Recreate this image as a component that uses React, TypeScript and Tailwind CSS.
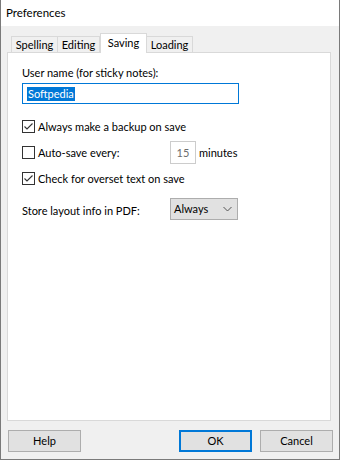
import React from "react";

const font = { fontFamily: 'Lato, "Liberation Sans", sans-serif' };

function Check({ checked }: { checked: boolean }) {
  return (
    <div className="w-[13px] h-[13px] border border-[#333333] bg-white flex items-center justify-center shrink-0">
      {checked && (
        <svg width="11" height="11" viewBox="0 0 11 11">
          <polyline points="1.5,5.5 4,8 9.5,2.5" fill="none" stroke="#333333" strokeWidth="1.1" />
        </svg>
      )}
    </div>
  );
}

export default function App() {
  return (
    <div
      className="w-[340px] h-[460px] border-x border-b border-[#7a7a7a] bg-[#f0f0f0] flex flex-col text-[11px] text-black leading-[16px]"
      style={font}
    >
      <div className="h-[26px] bg-white flex items-center pl-[5px] text-[11.5px]">Preferences</div>
      <div className="mt-[7px] h-[19px] flex items-end pl-[10px] pr-[8px]">
        <div className="w-[47px] h-[16px] border border-b-0 border-[#d9d9d9] flex items-center justify-center">Spelling</div>
        <div className="w-[42px] h-[16px] border border-b-0 border-l-0 border-[#d9d9d9] flex items-center justify-center">Editing</div>
        <div className="w-[47px] h-[20px] -mb-px relative z-10 border border-b-0 border-[#d9d9d9] bg-white flex items-start pt-[1px] justify-center">Saving</div>
        <div className="w-[46px] h-[16px] border border-b-0 border-l-0 border-[#d9d9d9] flex items-center justify-center">Loading</div>
      </div>
      <div className="ml-[6px] mr-[8px] h-[369px] border border-[#d9d9d9] bg-white flex flex-col pl-[14px]">
        <div className="mt-[12px] h-[16px]">User name (for sticky notes):</div>
        <div className="mt-[2px] w-[217px] h-[21px] border border-[#0078d7] flex items-center pl-[4px]">
          <span className="bg-[#0078d7] text-white h-[14px] flex items-center px-[1px]">Softpedia</span>
        </div>
        <div className="mt-[16px] h-[13px] flex items-center gap-[3px]">
          <Check checked />
          <span>Always make a backup on save</span>
        </div>
        <div className="mt-[13px] h-[13px] flex items-center">
          <Check checked={false} />
          <span className="ml-[3px] w-[132px]">Auto-save every:</span>
          <div className="w-[26px] h-[23px] border border-[#cccccc] flex items-center justify-center text-[#6d6d6d] shrink-0">15</div>
          <span className="ml-[3px]">minutes</span>
        </div>
        <div className="mt-[13px] h-[13px] flex items-center gap-[3px]">
          <Check checked />
          <span>Check for overset text on save</span>
        </div>
        <div className="mt-[13px] h-[22px] flex items-center">
          <span className="w-[148px] pt-[4px]">Store layout info in PDF:</span>
          <div className="w-[68px] h-[22px] border border-[#adadad] bg-[#e1e1e1] flex items-center pl-[3px] pr-[5px] justify-between">
            <span>Always</span>
            <svg width="9" height="6" viewBox="0 0 9 6">
              <polyline points="0.5,1 4.5,5 8.5,1" fill="none" stroke="#555" strokeWidth="1" />
            </svg>
          </div>
        </div>
      </div>
      <div className="mt-[9px] h-[22px] flex pl-[7px] pr-[6px]">
        <div className="w-[73px] h-[22px] border border-[#adadad] bg-[#e1e1e1] flex items-center justify-center">Help</div>
        <div className="flex-1" />
        <div className="w-[73px] h-[22px] border-2 border-[#0078d7] bg-[#e1e1e1] flex items-center justify-center">OK</div>
        <div className="ml-[8px] w-[73px] h-[22px] border border-[#adadad] bg-[#e1e1e1] flex items-center justify-center">Cancel</div>
      </div>
    </div>
  );
}
